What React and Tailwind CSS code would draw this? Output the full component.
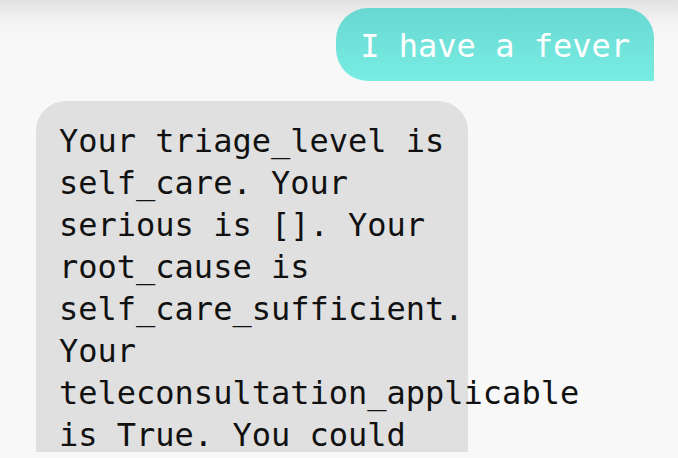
export default function App() {
  const mono = { fontFamily: '"DejaVu Sans Mono", "Liberation Mono", monospace' };
  return (
    <div className="w-[678px] h-[458px] overflow-hidden bg-[#f8f8f8]">
      <div className="h-[452px] overflow-hidden bg-[linear-gradient(to_bottom,#e1e1e1_0px,#f3f3f3_22px,#f8f8f8_44px)]">
        <div className="flex flex-col gap-5 pt-2 px-6">
          <div className="flex justify-end">
            <div
              className="h-[73px] px-6 pt-[18px] pb-[15px] rounded-tl-[32px] rounded-bl-[32px] rounded-tr-[30px] rounded-br-none bg-gradient-to-b from-[#69d8d2] to-[#78ede3] text-white text-[32px] leading-[40px] whitespace-nowrap"
              style={mono}
            >
              I have a fever
            </div>
          </div>
          <div className="flex justify-start pl-3">
            <div
              className="w-[432px] pl-[23px] pr-[21px] pt-[19px] pb-5 rounded-tl-[30px] rounded-tr-[30px] bg-[#e0e0e0] text-[#111111] text-[32px] leading-[42px]"
              style={mono}
            >
              Your triage_level is self_care. Your serious is []. Your root_cause is self_care_sufficient. Your teleconsultation_applicable is True. You could consider teleconsultation.
            </div>
          </div>
        </div>
      </div>
    </div>
  );
}
